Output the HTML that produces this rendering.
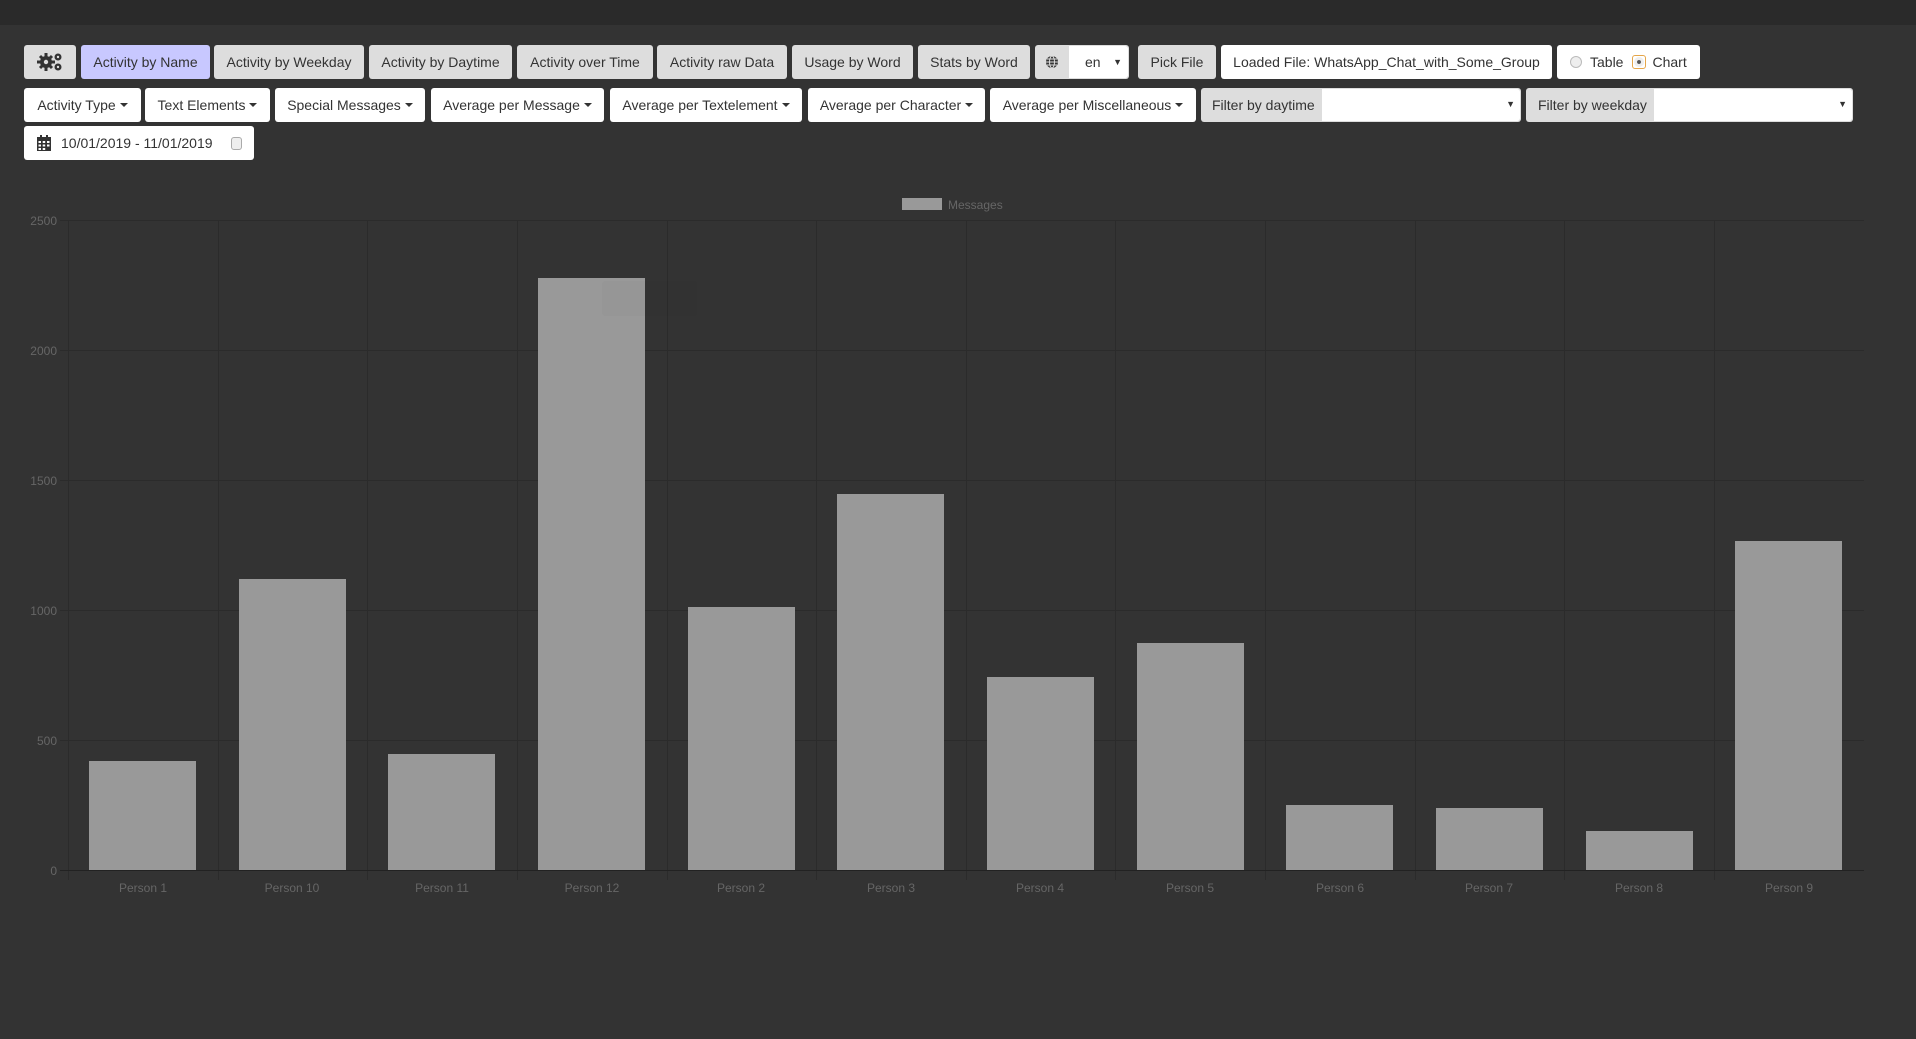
<!DOCTYPE html>
<html><head><meta charset="utf-8"><style>
*{box-sizing:border-box;margin:0;padding:0}
body{width:1916px;height:1039px;background:#333;font-family:"Liberation Sans",sans-serif;position:relative;overflow:hidden;color:#333}
.top{position:absolute;left:0;top:0;width:1916px;height:25px;background:#2a2a2a}
.b{position:absolute;height:34px;border-radius:3px;font-size:14px;display:flex;align-items:center;justify-content:center;white-space:nowrap;color:#333}
.g{background:#ddd}
.w{background:#fff}
.car{display:inline-block;width:0;height:0;border-left:4px solid transparent;border-right:4px solid transparent;border-top:4px solid #333;margin-left:4px;vertical-align:middle}
</style></head><body>
<div class="top"></div>
<div class="b g" style="left:24px;top:45px;width:52px"><svg width="28" height="22" viewBox="0 0 28 22"><g fill="#333"><circle cx="10" cy="11" r="6"/><g stroke="#333" stroke-width="3"><line x1="10" y1="2" x2="10" y2="20"/><line x1="1" y1="11" x2="19" y2="11"/><line x1="4" y1="5" x2="16" y2="17"/><line x1="16" y1="5" x2="4" y2="17"/></g><circle cx="10" cy="11" r="2.2" fill="#ddd"/><circle cx="22" cy="6" r="3.5"/><circle cx="22" cy="6" r="1.2" fill="#ddd"/><circle cx="22" cy="16" r="3.5"/><circle cx="22" cy="16" r="1.2" fill="#ddd"/></g></svg></div>
<div class="b" style="left:81px;top:45px;width:129px;background:#c8c8ff">Activity by Name</div>
<div class="b g" style="left:214px;top:45px;width:150px">Activity by Weekday</div>
<div class="b g" style="left:369px;top:45px;width:143px">Activity by Daytime</div>
<div class="b g" style="left:517px;top:45px;width:136px">Activity over Time</div>
<div class="b g" style="left:657px;top:45px;width:130px">Activity raw Data</div>
<div class="b g" style="left:792px;top:45px;width:121px">Usage by Word</div>
<div class="b g" style="left:918px;top:45px;width:112px">Stats by Word</div>
<div class="b g" style="left:1035px;top:45px;width:94px;justify-content:flex-start">
 <span style="width:34px;display:flex;justify-content:center"><svg width="14" height="14" viewBox="0 0 14 14"><circle cx="7" cy="7" r="6" fill="#333"/><g stroke="#ddd" stroke-width="1" fill="none"><ellipse cx="7" cy="7" rx="2.5" ry="6"/><line x1="1" y1="7" x2="13" y2="7"/><line x1="2" y1="4" x2="12" y2="4"/><line x1="2" y1="10" x2="12" y2="10"/></g></svg></span>
 <span style="background:#fff;height:32px;width:59px;display:flex;align-items:center;justify-content:space-between;padding:0 6px 0 16px;border-radius:0 3px 3px 0">en<span style="font-size:9px">▼</span></span></div>
<div class="b g" style="left:1138px;top:45px;width:78px">Pick File</div>
<div class="b w" style="left:1221px;top:45px;width:331px">Loaded File: WhatsApp_Chat_with_Some_Group</div>
<div class="b w" style="left:1557px;top:45px;width:143px;justify-content:flex-start;padding-left:13px">
 <span style="width:12px;height:12px;border-radius:50%;border:1px solid #bbb;background:#eee;margin-right:8px"></span>Table
 <span style="width:14px;height:14px;border:1px solid #e5a64a;border-radius:3px;margin:0 6px 0 9px;display:flex;align-items:center;justify-content:center"><span style="width:10px;height:10px;border-radius:50%;background:#ddd;border:3px solid #eee;box-shadow:inset 0 0 0 2px #555"></span></span>Chart</div>
<div class="b w" style="left:24px;top:88px;width:117px">Activity Type<span class="car"></span></div>
<div class="b w" style="left:145px;top:88px;width:125px">Text Elements<span class="car"></span></div>
<div class="b w" style="left:275px;top:88px;width:150px">Special Messages<span class="car"></span></div>
<div class="b w" style="left:431px;top:88px;width:173px">Average per Message<span class="car"></span></div>
<div class="b w" style="left:610px;top:88px;width:192px">Average per Textelement<span class="car"></span></div>
<div class="b w" style="left:808px;top:88px;width:177px">Average per Character<span class="car"></span></div>
<div class="b w" style="left:990px;top:88px;width:206px">Average per Miscellaneous<span class="car"></span></div>
<div class="b g" style="left:1201px;top:88px;width:320px;justify-content:flex-start;padding-left:11px">Filter by daytime
 <span style="position:absolute;left:121px;top:1px;width:198px;height:32px;background:#fff;border-radius:0 3px 3px 0;font-size:9px;text-align:right;padding:10px 5px 0 0">▼</span></div>
<div class="b g" style="left:1526px;top:88px;width:327px;justify-content:flex-start;padding-left:12px">Filter by weekday
 <span style="position:absolute;left:128px;top:1px;width:198px;height:32px;background:#fff;border-radius:0 3px 3px 0;font-size:9px;text-align:right;padding:10px 5px 0 0">▼</span></div>
<div class="b w" style="left:24px;top:126px;width:230px;justify-content:flex-start;padding-left:13px">
 <svg width="14" height="16" viewBox="0 0 14 16" style="margin-right:10px"><rect x="0" y="2" width="14" height="14" fill="#333"/><rect x="3" y="0" width="2" height="4" fill="#333"/><rect x="9" y="0" width="2" height="4" fill="#333"/><g fill="#fff"><rect x="1.5" y="6" width="2.5" height="2"/><rect x="5.7" y="6" width="2.5" height="2"/><rect x="10" y="6" width="2.5" height="2"/><rect x="1.5" y="9.5" width="2.5" height="2"/><rect x="5.7" y="9.5" width="2.5" height="2"/><rect x="10" y="9.5" width="2.5" height="2"/><rect x="1.5" y="13" width="2.5" height="2"/><rect x="5.7" y="13" width="2.5" height="2"/></g></svg>
 10/01/2019 - 11/01/2019
 <span style="position:absolute;left:207px;top:11px;width:11px;height:13px;border:1px solid #aaa;border-radius:3px;background:#eee"></span></div>
<svg style="position:absolute;left:0;top:0" width="1916" height="1039" font-family="Liberation Sans, sans-serif">
<rect x="902" y="198" width="40" height="12" fill="#999"/>
<text x="948" y="209" font-size="12" fill="#666">Messages</text>
<g stroke="#2b2b2b" stroke-width="1">
<line x1="60" y1="220.5" x2="1864" y2="220.5"/><line x1="60" y1="350.5" x2="1864" y2="350.5"/><line x1="60" y1="480.5" x2="1864" y2="480.5"/><line x1="60" y1="610.5" x2="1864" y2="610.5"/><line x1="60" y1="740.5" x2="1864" y2="740.5"/>
<line x1="68.5" y1="220" x2="68.5" y2="880"/><line x1="218.5" y1="220" x2="218.5" y2="880"/><line x1="367.5" y1="220" x2="367.5" y2="880"/><line x1="517.5" y1="220" x2="517.5" y2="880"/><line x1="667.5" y1="220" x2="667.5" y2="880"/><line x1="816.5" y1="220" x2="816.5" y2="880"/><line x1="966.5" y1="220" x2="966.5" y2="880"/><line x1="1115.5" y1="220" x2="1115.5" y2="880"/><line x1="1265.5" y1="220" x2="1265.5" y2="880"/><line x1="1415.5" y1="220" x2="1415.5" y2="880"/><line x1="1564.5" y1="220" x2="1564.5" y2="880"/><line x1="1714.5" y1="220" x2="1714.5" y2="880"/>
</g>
<line x1="60" y1="870.5" x2="1864" y2="870.5" stroke="#222"/>
<g fill="#666" font-size="12" text-anchor="end">
<text x="57" y="225">2500</text><text x="57" y="355">2000</text><text x="57" y="485">1500</text><text x="57" y="615">1000</text><text x="57" y="745">500</text><text x="57" y="875">0</text>
</g>
<g fill="#999">
<rect x="89" y="761" width="107" height="109"/>
<rect x="239" y="579" width="107" height="291"/>
<rect x="388" y="754" width="107" height="116"/>
<rect x="538" y="278" width="107" height="592"/>
<rect x="688" y="607" width="107" height="263"/>
<rect x="837" y="494" width="107" height="376"/>
<rect x="987" y="677" width="107" height="193"/>
<rect x="1137" y="643" width="107" height="227"/>
<rect x="1286" y="805" width="107" height="65"/>
<rect x="1436" y="808" width="107" height="62"/>
<rect x="1586" y="831" width="107" height="39"/>
<rect x="1735" y="541" width="107" height="329"/>
</g>
<rect x="602" y="281" width="95" height="35" rx="3" fill="rgba(0,0,0,0.015)"/>
<g fill="#666" font-size="12" text-anchor="middle">
<text x="143" y="892">Person 1</text><text x="292" y="892">Person 10</text><text x="442" y="892">Person 11</text><text x="592" y="892">Person 12</text><text x="741" y="892">Person 2</text><text x="891" y="892">Person 3</text><text x="1040" y="892">Person 4</text><text x="1190" y="892">Person 5</text><text x="1340" y="892">Person 6</text><text x="1489" y="892">Person 7</text><text x="1639" y="892">Person 8</text><text x="1789" y="892">Person 9</text>
</g>
</svg>
</body></html>
